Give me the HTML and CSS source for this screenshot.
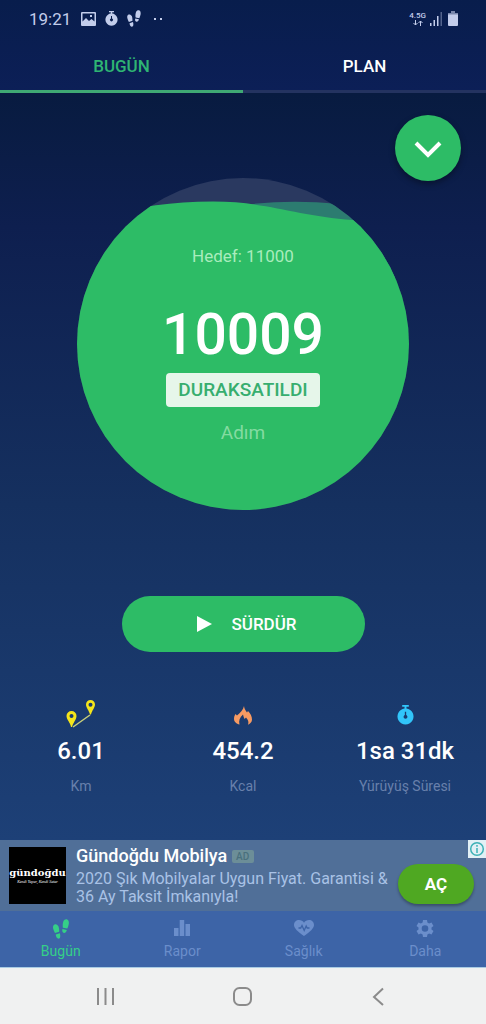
FILE: index.html
```html
<!DOCTYPE html>
<html lang="tr">
<head>
<meta charset="utf-8">
<meta name="viewport" content="width=device-width, initial-scale=1">
<title>Adımsayar</title>
<link rel="stylesheet" href="styles.css">
</head>
<body>
<svg class="defs" aria-hidden="true">
  <symbol id="feet" viewBox="0 0 16 20">
    <path d="M10.300 2.500C11 .7 12.500 0 13.800.3c1.900.6 2.300 2.700 2 4.700-.3 1.800-.9 3.300-1.500 4.600L9.900 8.800c-.4-2-.2-4.600.4-6.300zM9.500 10.100l4.300.9c-.3 1.900-1.500 3.200-3 2.900-1.500-.4-1.900-2-1.300-3.800zM5.400 7.200C4.400 5.400 2.800 4.800 1.500 5.400 0 6.200-.2 8 .2 9.800c.4 1.700 1.100 3 1.800 4.200l4.200-1.300c.1-1.900-.2-4-.8-5.500zM6.800 14.200l-4.100 1.300c.4 2.300 1.200 4.200 2.900 4.200 1.800-.1 2.100-2.800 1.200-5.500z"/>
  </symbol>
  <symbol id="timer" viewBox="0 0 18 21">
    <path fill-rule="evenodd" d="M5.500 0h7v1.800H10v1.800a8.500 8.500 0 1 1-2 0V1.800H5.500zM8.300 7v3.600a2 2 0 1 0 1.400 0V7z"/>
  </symbol>
</svg>

<header class="top">
  <div class="status">
    <time class="clock">19:21</time>
    <svg class="status-image" viewBox="0 0 15 14"><path fill-rule="evenodd" d="M1 0h13a1 1 0 0 1 1 1v12a1 1 0 0 1-1 1H1a1 1 0 0 1-1-1V1a1 1 0 0 1 1-1zm.5 1.500v8L5 6l3 3 2.500-2 3 2.500v-8zM9 3h2v2H9z"/></svg>
    <svg class="status-timer"><use href="#timer"/></svg>
    <svg class="status-feet"><use href="#feet"/></svg>
    <span class="dots"><i></i><i></i></span>
    <span class="network">4.5G
      <svg viewBox="0 0 10 6"><path d="M2.500 0v5M.5 3l2 2 2-2M7.500 6V1M5.500 3l2-2 2 2"/></svg>
    </span>
    <svg class="signal" viewBox="0 0 12 14"><path d="M0 11h1.500v3H0zM3.500 8H5v6H3.500zM7 4h1.500v10H7z"/><path opacity=".4" d="M10.500 0H12v14h-1.500z"/></svg>
    <svg class="battery" viewBox="0 0 10 15"><path opacity=".6" d="M3 0h4v2h3v2H0V2h3z"/><path d="M0 3.500h10V14a1 1 0 0 1-1 1H1a1 1 0 0 1-1-1z"/></svg>
  </div>
  <nav class="tabs">
    <button class="tab tab-active" type="button">BUGÜN</button>
    <button class="tab" type="button">PLAN</button>
  </nav>
</header>

<main class="main">
  <button class="fab" type="button" aria-label="Genişlet">
    <svg viewBox="0 0 28 17"><path d="M2 2l12 12L26 2"/></svg>
  </button>

  <section class="gauge">
    <svg class="gauge-fill" viewBox="0 0 332 332" aria-hidden="true">
      <clipPath id="disc"><circle cx="166" cy="166" r="166"/></clipPath>
      <g clip-path="url(#disc)">
        <path class="disc" d="M0 0h332v332H0z"/>
        <path class="wave-back" d="M150 30C185 23 225 22 260 26L332 38V100H150z"/>
        <path class="wave" d="M0 42C50 32 85 23.500 136 23.500C190 23.500 220 38 276 42H332V332H0z"/>
      </g>
    </svg>
    <p class="goal">Hedef: 11000</p>
    <p class="steps">10009</p>
    <p class="paused">DURAKSATILDI</p>
    <p class="unit">Adım</p>
  </section>

  <button class="resume" type="button">
    <svg viewBox="0 0 15 16"><path d="M0 0l15 8-15 8z"/></svg>
    SÜRDÜR
  </button>

  <section class="stats">
    <div class="stat">
      <svg class="stat-route" viewBox="0 0 30 29">
        <path class="route-line" d="M7 27 24 15"/>
        <path class="pin" fill-rule="evenodd" d="M5.500 11a5 5 0 0 1 5 5c0 3.500-3.500 7-4.500 11h-1C4.500 23 .5 19.500.5 16a5 5 0 0 1 5-5zm0 3a2 2 0 1 0 0 4 2 2 0 0 0 0-4z"/>
        <path class="pin" fill-rule="evenodd" d="M24.500 0a4.500 4.500 0 0 1 4.500 4.500c0 3-3 6-4 10h-1c-1-4-4-7-4-10A4.500 4.500 0 0 1 24.500 0zm0 2.700a2 2 0 1 0 0 4 2 2 0 0 0 0-4z"/>
      </svg>
      <strong class="stat-value">6.01</strong>
      <span class="stat-label">Km</span>
    </div>
    <div class="stat">
      <svg class="stat-flame" viewBox="0 0 18 19"><path d="M10 0c.3 2.500 1.200 4.200 3 6.500l1-1.500c2.500 2.500 4 5.500 4 8.500 0 2.300-1.500 4.300-4 5.200 1-2.500.2-4.700-2-7.200l-1.500 1.500C9.800 11.500 9.300 10.200 9 8.500c-3.300 3-4.500 6-3.500 10C2.500 17.500 0 16 0 12.700c0-1.700.5-3.200 1.500-4.700l1.500 1.500C6 7 9.300 4 10 0z"/></svg>
      <strong class="stat-value">454.2</strong>
      <span class="stat-label">Kcal</span>
    </div>
    <div class="stat">
      <svg class="stat-timer"><use href="#timer"/></svg>
      <strong class="stat-value">1sa 31dk</strong>
      <span class="stat-label">Yürüyüş Süresi</span>
    </div>
  </section>
</main>

<aside class="ad">
  <div class="ad-logo"><b>gündoğdu</b><em>Kendi Yapar, Kendi Satar</em></div>
  <div class="ad-text">
    <h2 class="ad-title">Gündoğdu Mobilya <span class="ad-tag">AD</span></h2>
    <p class="ad-copy">2020 Şık Mobilyalar Uygun Fiyat. Garantisi &amp; 36 Ay Taksit İmkanıyla!</p>
  </div>
  <button class="ad-open" type="button">AÇ</button>
  <button class="ad-info" type="button" aria-label="Reklam bilgisi">
    <svg viewBox="0 0 16 16"><circle cx="8" cy="8" r="6.300"/><path d="M8 7v5M8 4v1.800"/></svg>
  </button>
</aside>

<nav class="bottom">
  <a class="item item-active" href="#"><svg class="item-feet"><use href="#feet"/></svg>Bugün</a>
  <a class="item" href="#"><svg viewBox="0 0 16 18"><path d="M0 9h4.500v8H0zM5.700 1h4.500v16H5.700zM11.500 5H16v12h-4.500z"/></svg>Rapor</a>
  <a class="item" href="#"><svg class="item-heart" viewBox="0 0 20 18"><path d="M10 17C4 12.500 0 9.500 0 6c0-3 2.200-5 5-5 2 0 4 1 5 2.700C11 2 13 1 15 1c2.800 0 5 2 5 5 0 3.500-4 6.500-10 11z"/><path class="pulse" d="M4.500 9h2.200L8 6.500l2.200 5 2-4.500 1 2h2.300"/></svg>Sağlık</a>
  <a class="item" href="#"><svg viewBox="0 0 18 18"><path fill-rule="evenodd" d="M7 1h4l.4 2.500 1.700 1 2.400-1 2 3.400-2 1.600v2l2 1.600-2 3.400-2.400-1-1.700 1L11 18H7l-.4-2.500-1.700-1-2.400 1-2-3.400 2-1.600v-2l-2-1.600 2-3.400 2.400 1 1.700-1zm2 5.200a3.300 3.300 0 1 0 0 6.600 3.300 3.300 0 0 0 0-6.600z"/></svg>Daha</a>
</nav>

<footer class="system">
  <button type="button" aria-label="Son uygulamalar"><svg viewBox="0 0 20 20"><path d="M2 2v17M9.500 2v17M17 2v17"/></svg></button>
  <button type="button" aria-label="Ana ekran"><svg viewBox="0 0 20 20"><rect x="1" y="2" width="17" height="17" rx="5.500"/></svg></button>
  <button type="button" aria-label="Geri"><svg viewBox="0 0 20 20"><path d="M13 2.500 4 11l9 8"/></svg></button>
</footer>
</body>
</html>
```

FILE: styles.css
```css
* {
  box-sizing: border-box;
}

body {
  display: flex;
  flex-direction: column;
  min-height: 100vh;
  margin: 0;
  background: #081b40;
  color: #fff;
  font-family: Roboto, "Noto Sans", sans-serif;
}

p,
h2 {
  margin: 0;
}

svg {
  display: block;
  fill: currentColor;
}

button {
  padding: 0;
  border: 0;
  background: none;
  color: inherit;
  font: inherit;
}

.defs {
  position: absolute;
  width: 0;
  height: 0;
}

.top {
  background: linear-gradient(#081d4c, #0c1f57);
}

.status {
  display: flex;
  align-items: center;
  height: 37px;
  padding: 0 28px 0 29px;
  color: #c3cdeb;
}

.clock {
  margin-right: 10px;
  font-size: 17px;
}

.status-image {
  width: 15px;
  height: 14px;
  margin-right: 9px;
}

.status-timer {
  width: 13px;
  height: 15px;
  margin-right: 9px;
}

.status-feet {
  width: 14px;
  height: 17px;
}

.dots {
  display: flex;
  gap: 4px;
  margin-left: 13px;
}

.dots i {
  width: 2px;
  height: 2px;
  background: currentColor;
}

.network {
  margin-left: auto;
  font-size: 8px;
  font-weight: 500;
  line-height: 8px;
}

.network svg {
  width: 10px;
  height: 6px;
  margin: 0 auto;
  fill: none;
  stroke: currentColor;
}

.signal {
  width: 12px;
  height: 14px;
  margin: 0 6px 0 4px;
}

.battery {
  width: 10px;
  height: 15px;
}

.tabs {
  display: flex;
}

.tab {
  flex: 1;
  height: 56px;
  padding-top: 4px;
  border-bottom: 3px solid #243360;
  font-size: 17px;
  font-weight: 500;
}

.tab-active {
  border-color: #3fa974;
  color: #2fb573;
}

.main {
  position: relative;
  display: flex;
  flex: 1;
  flex-direction: column;
  align-items: center;
  padding: 85px 0 44px;
  background: linear-gradient(#081b40, #0e1f4f 18%, #15305f 55%, #1d4077);
}

.fab {
  position: absolute;
  top: 22px;
  right: 25px;
  display: grid;
  place-items: center;
  width: 66px;
  height: 66px;
  border-radius: 50%;
  background: #2dbc66;
  box-shadow: 0 3px 6px rgba(0, 0, 0, 0.35);
}

.fab svg {
  width: 28px;
  height: 17px;
  margin-top: 2px;
  fill: none;
  stroke: #fff;
  stroke-width: 4;
}

.gauge {
  position: relative;
  display: flex;
  flex-direction: column;
  align-items: center;
  width: 332px;
  height: 332px;
  padding-top: 68px;
}

.gauge-fill {
  position: absolute;
  inset: 0;
}

.disc {
  fill: #2a3960;
}

.wave-back {
  fill: #2c7c70;
}

.wave {
  fill: #2dbc66;
}

.gauge p {
  position: relative;
}

.goal {
  color: #a9ecbd;
  font-size: 17px;
  line-height: 20px;
}

.steps {
  margin-top: 37px;
  font-size: 57px;
  font-weight: 500;
  line-height: 64px;
}

.paused {
  margin-top: 6px;
  padding: 0 12px;
  border-radius: 4px;
  background: #e6f6ea;
  color: #37ae6f;
  font-size: 19px;
  font-weight: 500;
  line-height: 34px;
}

.unit {
  margin-top: 14px;
  color: #84dba1;
  font-size: 19px;
  line-height: 24px;
}

.resume {
  display: flex;
  align-items: center;
  justify-content: center;
  gap: 19px;
  width: 50%;
  height: 56px;
  margin-top: 86px;
  padding-left: 8px;
  border-radius: 28px;
  background: #2dbc66;
  font-size: 17px;
  font-weight: 500;
}

.resume svg {
  width: 15px;
  height: 16px;
}

.stats {
  display: flex;
  align-self: stretch;
  margin-top: 48px;
}

.stat {
  display: flex;
  flex: 1;
  flex-direction: column;
  align-items: center;
}

.stat svg {
  height: 29px;
}

.stat-route {
  width: 30px;
}

.pin {
  fill: #f5e51b;
}

.route-line {
  fill: none;
  stroke: #c9cf7a;
  stroke-width: 1.5;
}

.stat .stat-flame {
  width: 18px;
  height: 19px;
  margin: 6px 0 4px;
  color: #f79a62;
}

.stat .stat-timer {
  width: 17px;
  height: 20px;
  margin: 5px 0 4px;
  color: #31c5fa;
}

.stat-value {
  margin-top: 8px;
  font-size: 24px;
  font-weight: 500;
  line-height: 28px;
}

.stat-label {
  margin-top: 12px;
  color: #6880ab;
  font-size: 14px;
  line-height: 18px;
}

.ad {
  position: relative;
  display: flex;
  align-items: center;
  height: 71px;
  padding: 0 12px 0 9px;
  background: #506f98;
}

.ad-logo {
  display: flex;
  flex: none;
  flex-direction: column;
  align-items: center;
  justify-content: center;
  width: 57px;
  height: 57px;
  background: #000;
  text-align: center;
}

.ad-logo b {
  font: 700 10px/12px "DejaVu Serif", serif;
}

.ad-logo em {
  font: italic 4px/6px "Liberation Serif", serif;
}

.ad-text {
  flex: 1;
  margin-left: 10px;
}

.ad-title {
  margin-bottom: 3px;
  font-size: 18px;
  font-weight: 500;
  line-height: 22px;
}

.ad-tag {
  display: inline-block;
  width: 22px;
  border-radius: 2px;
  background: #6c8e98;
  color: #49707d;
  font-size: 10px;
  line-height: 13px;
  text-align: center;
  vertical-align: 2px;
}

.ad-copy {
  color: #a9c2e6;
  font-size: 16px;
  line-height: 18px;
}

.ad-open {
  flex: none;
  width: 76px;
  height: 40px;
  margin-top: 16px;
  border-radius: 20px;
  background: #4fa822;
  box-shadow: 0 2px 3px rgba(0, 0, 0, 0.3);
  font-size: 17px;
  font-weight: 700;
}

.ad-info {
  position: absolute;
  top: 0;
  right: 0;
  width: 18px;
  height: 18px;
  padding: 1px;
  background: #e2f0f5;
}

.ad-info svg {
  fill: none;
  stroke: #3db1b6;
  stroke-width: 1.5;
}

.bottom {
  display: flex;
  height: 56px;
  background: #3d64a7;
}

.item {
  display: flex;
  flex: 1;
  flex-direction: column;
  align-items: center;
  gap: 5px;
  padding-top: 8px;
  color: #6b8ecb;
  font-size: 14px;
  line-height: 18px;
  text-decoration: none;
}

.item svg {
  width: 18px;
  height: 18px;
}

.item .item-feet {
  height: 20px;
  margin-bottom: -2px;
}

.item .item-heart {
  width: 20px;
}

.pulse {
  fill: none;
  stroke: #3d64a7;
  stroke-width: 1.3;
}

.item-active {
  color: #35cf87;
}

.system {
  display: flex;
  align-items: center;
  justify-content: space-between;
  height: 57px;
  padding: 0 96px;
  border-top: 1px solid #a9cbe3;
  background: #f0f1f1;
  color: #8b8b8b;
}

.system svg {
  width: 20px;
  height: 20px;
  fill: none;
  stroke: currentColor;
  stroke-width: 2;
}
```
